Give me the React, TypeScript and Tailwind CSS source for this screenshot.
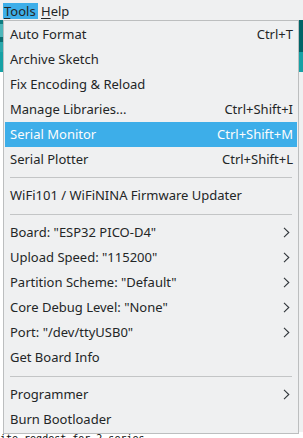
import React from "react";

const font = { fontFamily: '"Noto Sans", "DejaVu Sans", sans-serif' };

type Item =
  | { kind: "item"; label: string; shortcut?: string; sub?: boolean; active?: boolean }
  | { kind: "sep"; h: number };

const items: Item[] = [
  { kind: "item", label: "Auto Format", shortcut: "Ctrl+T" },
  { kind: "item", label: "Archive Sketch" },
  { kind: "item", label: "Fix Encoding & Reload" },
  { kind: "item", label: "Manage Libraries...", shortcut: "Ctrl+Shift+I" },
  { kind: "item", label: "Serial Monitor", shortcut: "Ctrl+Shift+M", active: true },
  { kind: "item", label: "Serial Plotter", shortcut: "Ctrl+Shift+L" },
  { kind: "sep", h: 11 },
  { kind: "item", label: "WiFi101 / WiFiNINA Firmware Updater" },
  { kind: "sep", h: 12 },
  { kind: "item", label: 'Board: "ESP32 PICO-D4"', sub: true },
  { kind: "item", label: 'Upload Speed: "115200"', sub: true },
  { kind: "item", label: 'Partition Scheme: "Default"', sub: true },
  { kind: "item", label: 'Core Debug Level: "None"', sub: true },
  { kind: "item", label: 'Port: "/dev/ttyUSB0"', sub: true },
  { kind: "item", label: "Get Board Info" },
  { kind: "sep", h: 12 },
  { kind: "item", label: "Programmer", sub: true },
  { kind: "item", label: "Burn Bootloader" },
];

function Chevron() {
  return (
    <svg width="7" height="11" viewBox="0 0 7 11" className="shrink-0">
      <path d="M1 0.8 L5.8 5.5 L1 10.2" fill="none" stroke="#31363b" strokeWidth="1.1" />
    </svg>
  );
}

export default function App() {
  return (
    <div className="relative w-[303px] h-[438px] overflow-hidden bg-white" style={font}>
      {/* menubar */}
      <div className="flex h-[20px] items-start bg-[#eff0f1] pl-[3px] pt-[3px] text-[13px] leading-[16px] text-[#232627]">
        <div className="h-[16px] w-[35px] bg-[#3daee9] pl-[1px]">
          <span className="underline decoration-1 underline-offset-2">T</span>ools
        </div>
        <div className="ml-[3px] h-[16px]">
          <span className="underline decoration-1 underline-offset-2">H</span>elp
        </div>
      </div>

      {/* background window content */}
      <div className="flex flex-col">
        <div className="flex h-[32px]">
          <div className="w-[3px] bg-[#17a1a5] flex flex-col">
            <div className="h-[4px] bg-[#0e7d81]" />
            <div className="h-[13px] bg-[#4db6ba]" />
            <div className="h-[5px] bg-[#0b6f73]" />
            <div className="flex-1 bg-[#2aa8ac]" />
          </div>
          <div className="flex-1" />
          <div className="w-[4px] bg-[#006468]" />
        </div>
        <div className="flex h-[20px]">
          <div className="w-[3px] bg-[#17a1a5]" />
          <div className="flex-1" />
          <div className="w-[4px] bg-[#17a1a5]" />
        </div>
        <div className="flex h-[360px]">
          <div className="w-[3px] bg-white" />
          <div className="flex-1" />
          <div className="w-[4px] bg-[#eff0f1]" />
        </div>
        <div
          className="mt-[1px] pl-0 text-[10px] leading-[12px] text-[#111]"
          style={{ fontFamily: '"DejaVu Sans Mono", monospace' }}
        >
          ite reqdest for 2 series.
        </div>
      </div>

      {/* dropdown menu */}
      <div className="absolute left-[3px] top-[20px] w-[296px] border border-[#bcbebf] bg-[#eff0f1] px-[1px] py-[1px] text-[13px] text-[#232627]">
        {items.map((it, i) =>
          it.kind === "sep" ? (
            <div key={i} className="flex items-center px-[5px]" style={{ height: it.h }}>
              <div className="h-px w-full bg-[#c3c5c6]" />
            </div>
          ) : (
            <div
              key={i}
              className={
                "flex h-[25px] items-center justify-between pl-[5px] pr-[4px] " +
                (it.active ? "bg-[#3daee9] text-[#fcfcfc]" : "")
              }
            >
              <span className="whitespace-nowrap">{it.label}</span>
              {it.shortcut ? <span className="whitespace-nowrap">{it.shortcut}</span> : null}
              {it.sub ? (
                <span className="pr-[3px]">
                  <Chevron />
                </span>
              ) : null}
            </div>
          )
        )}
      </div>
    </div>
  );
}
